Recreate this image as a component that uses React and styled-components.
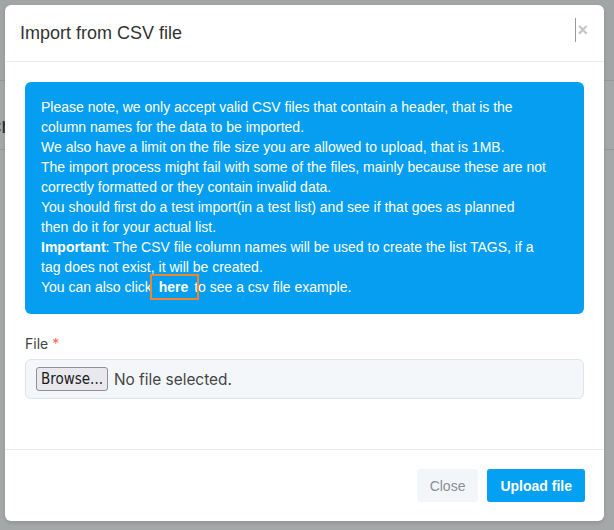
import React from "react";
import styled, { createGlobalStyle } from "styled-components";

const Global = createGlobalStyle`
  html, body { margin: 0; padding: 0; }
  body {
    width: 614px;
    height: 530px;
    overflow: hidden;
    background: #ffffff;
    font-family: "Liberation Sans", Arial, sans-serif;
  }
`;

const Page = styled.div`
  position: relative;
  width: 614px;
  height: 530px;
  overflow: hidden;
  background: #ffffff;
`;

const PageHeader = styled.div`
  height: 80px;
  border-bottom: 1px solid #e6e6e6;
  background: #fbfbfb;
`;

const PageContent = styled.div`
  display: flex;
  flex-direction: column;
  gap: 14px;
  padding: 32px 0 0 0;
  margin-left: -60px;
`;

const PageTitle = styled.div`
  font-size: 22px;
  color: #333;
  padding-bottom: 10px;
  border-bottom: 1px solid #e4e4e4;
`;

const PageLink = styled.div`
  margin-top: 70px;
  font-size: 20px;
  color: #0a7fd0;
`;

const PageText = styled.div`
  font-size: 16px;
  color: #555;
`;

const Backdrop = styled.div`
  position: absolute;
  inset: 0;
  background: rgba(30, 38, 40, 0.4);
`;

const Dialog = styled.div`
  position: absolute;
  left: 5px;
  top: 5px;
  width: 599px;
  background: #ffffff;
  border-radius: 6px;
  box-shadow: 0 2px 4px rgba(0, 0, 0, 0.12);
  display: flex;
  flex-direction: column;
`;

const Header = styled.div`
  height: 57px;
  box-sizing: border-box;
  display: flex;
  align-items: center;
  justify-content: space-between;
  padding: 0 16px 0 15px;
  border-bottom: 1px solid #e9ecef;
`;

const Title = styled.h4`
  margin: 0;
  font-size: 18px;
  font-weight: 400;
  color: #333;
  font-family: "Liberation Sans", Arial, sans-serif;
`;

const CloseX = styled.button`
  border: 0;
  background: transparent;
  padding: 0 0 0 1px;
  height: 24px;
  display: flex;
  align-items: center;
  border-left: 1px solid #9a9a9a;
  color: #c4c4c4;
  font-size: 18px;
  font-weight: 700;
  line-height: 1;
  font-family: "Liberation Sans", Arial, sans-serif;
  margin-top: -6px;
`;

const Body = styled.div`
  padding: 20px 20px 20px 20px;
`;

const Alert = styled.div`
  background: #059ef1;
  color: #ffffff;
  border-radius: 6px;
  padding: 15px 16px 17px 16px;
  font-size: 14px;
  line-height: 20px;
  font-family: "Liberation Sans", Arial, sans-serif;
`;

const Line = styled.div`
  white-space: nowrap;
`;

const HereLink = styled.a`
  color: #ffffff;
  font-weight: 700;
  text-decoration: none;
  outline: 2px solid #f0862a;
  outline-offset: 0;
  padding: 3px 9px 3px 7px;
  margin-left: -4px;
  margin-right: -7px;
`;

const FormGroup = styled.div`
  margin-top: 20px;
  margin-bottom: 30px;
  display: flex;
  flex-direction: column;
  gap: 5px;
`;

const Label = styled.label`
  font-family: Inter, "Noto Sans", sans-serif;
  font-size: 14px;
  line-height: 20px;
  color: #444;
`;

const Req = styled.span`
  color: #f26b4f;
`;

const FileBox = styled.div`
  height: 40px;
  box-sizing: border-box;
  background: #f4f7fa;
  border: 1px solid #dfe4ea;
  border-radius: 6px;
  display: flex;
  align-items: center;
  gap: 6px;
  padding: 0 10px;
`;

const Browse = styled.button`
  height: 24px;
  box-sizing: border-box;
  padding: 0 4px;
  background: #e9e9ed;
  border: 1px solid #8f8f9d;
  border-radius: 3px;
  color: #1b1b1b;
  font-family: "DejaVu Sans Condensed", "DejaVu Sans", sans-serif;
  font-size: 15px;
  font-stretch: condensed;
`;

const FileName = styled.span`
  font-family: Inter, "Noto Sans", sans-serif;
  font-size: 15.4px;
  color: #454545;
`;

const Footer = styled.div`
  border-top: 1px solid #e9ecef;
  padding: 19px 19px 19px 20px;
  display: flex;
  justify-content: flex-end;
  gap: 9px;
`;

const Button = styled.button`
  height: 33px;
  box-sizing: border-box;
  border: 0;
  border-radius: 3px;
  padding: 0 13px;
  font-family: "Liberation Sans", Arial, sans-serif;
  font-size: 14px;
  font-weight: ${(p) => (p.$primary ? 700 : 400)};
  background: ${(p) => (p.$primary ? "#03a0f4" : "#f3f6f9")};
  color: ${(p) => (p.$primary ? "#ffffff" : "#8a909a")};
`;

export default function App() {
  return (
    <Page>
      <Global />
      <PageHeader />
      <PageContent>
        <PageTitle>Subscribers list</PageTitle>
        <PageLink>View ●</PageLink>
        <PageText>TOTAL</PageText>
      </PageContent>
      <Backdrop />
      <Dialog>
        <Header>
          <Title>Import from CSV file</Title>
          <CloseX aria-label="Close">×</CloseX>
        </Header>
        <Body>
          <Alert>
            <Line>Please note, we only accept valid CSV files that contain a header, that is the</Line>
            <Line>column names for the data to be imported.</Line>
            <Line>We also have a limit on the file size you are allowed to upload, that is 1MB.</Line>
            <Line>The import process might fail with some of the files, mainly because these are not</Line>
            <Line>correctly formatted or they contain invalid data.</Line>
            <Line>You should first do a test import(in a test list) and see if that goes as planned</Line>
            <Line>then do it for your actual list.</Line>
            <Line>
              <b>Important</b>: The CSV file column names will be used to create the list TAGS, if a
            </Line>
            <Line>tag does not exist, it will be created.</Line>
            <Line>
              You can also click <HereLink href="#">here</HereLink> to see a csv file example.
            </Line>
          </Alert>
          <FormGroup>
            <Label>
              File <Req>*</Req>
            </Label>
            <FileBox>
              <Browse type="button">Browse...</Browse>
              <FileName>No file selected.</FileName>
            </FileBox>
          </FormGroup>
        </Body>
        <Footer>
          <Button type="button">Close</Button>
          <Button type="button" $primary>
            Upload file
          </Button>
        </Footer>
      </Dialog>
    </Page>
  );
}
